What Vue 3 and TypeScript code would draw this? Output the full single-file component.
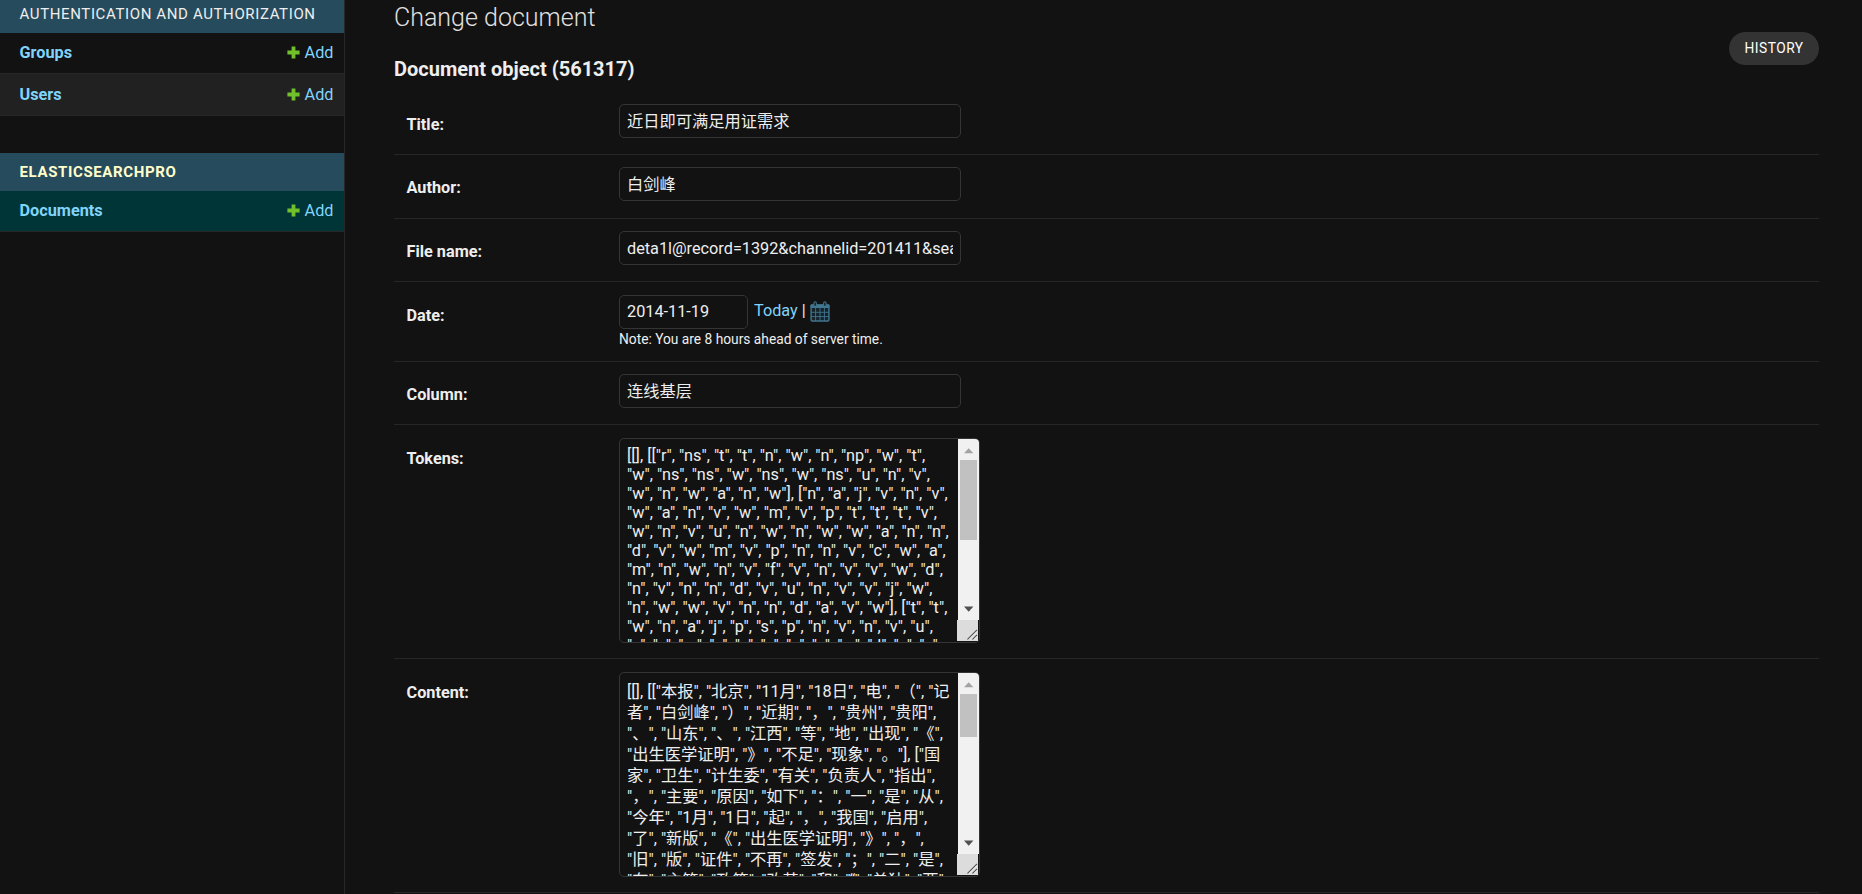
<script setup lang="ts">
interface SidebarItem { name: string; tone: string }
interface SidebarModule { caption: string; current: boolean; items: SidebarItem[] }

const modules: SidebarModule[] = [
  {
    caption: 'Authentication and Authorization',
    current: false,
    items: [{ name: 'Groups', tone: 'plain' }, { name: 'Users', tone: 'even' }],
  },
  {
    caption: 'Elasticsearchpro',
    current: true,
    items: [{ name: 'Documents', tone: 'current' }],
  },
]

interface Field { label: string; kind: 'text' | 'date' | 'area'; value?: string; lines?: string[]; cls: string }

const fields: Field[] = [
  { label: 'Title:', kind: 'text', value: '近日即可满足用证需求', cls: 'title-row' },
  { label: 'Author:', kind: 'text', value: '白剑峰', cls: 'author-row' },
  { label: 'File name:', kind: 'text', value: 'deta1l@record=1392&channelid=201411&sea', cls: 'file-row' },
  { label: 'Date:', kind: 'date', value: '2014-11-19', cls: 'date-row' },
  { label: 'Column:', kind: 'text', value: '连线基层', cls: 'column-row' },
  {
    label: 'Tokens:',
    kind: 'area',
    cls: 'tokens-row',
    lines: [
      '[[], [["r", "ns", "t", "t", "n", "w", "n", "np", "w", "t",',
      '"w", "ns", "ns", "w", "ns", "w", "ns", "u", "n", "v",',
      '"w", "n", "w", "a", "n", "w"], ["n", "a", "j", "v", "n", "v",',
      '"w", "a", "n", "v", "w", "m", "v", "p", "t", "t", "t", "v",',
      '"w", "n", "v", "u", "n", "w", "n", "w", "w", "a", "n", "n",',
      '"d", "v", "w", "m", "v", "p", "n", "n", "v", "c", "w", "a",',
      '"m", "n", "w", "n", "v", "f", "v", "n", "v", "v", "w", "d",',
      '"n", "v", "n", "n", "d", "v", "u", "n", "v", "v", "j", "w",',
      '"n", "w", "w", "v", "n", "n", "d", "a", "v", "w"], ["t", "t",',
      '"w", "n", "a", "j", "p", "s", "p", "n", "v", "n", "v", "u",',
      '"v", "v", "m", "v", "v", "v", "v", "v", "w", "d", "v", "v",',
    ],
  },
  {
    label: 'Content:',
    kind: 'area',
    cls: 'content-row',
    lines: [
      '[[], [["本报", "北京", "11月", "18日", "电", "（", "记',
      '者", "白剑峰", "）", "近期", "，", "贵州", "贵阳",',
      '"、", "山东", "、", "江西", "等", "地", "出现", "《",',
      '"出生医学证明", "》", "不足", "现象", "。"], ["国',
      '家", "卫生", "计生委", "有关", "负责人", "指出",',
      '"，", "主要", "原因", "如下", "：", "一", "是", "从",',
      '"今年", "1月", "1日", "起", "，", "我国", "启用",',
      '"了", "新版", "《", "出生医学证明", "》", "，",',
      '"旧", "版", "证件", "不再", "签发", "；", "二", "是",',
      '"在", "主管", "政策", "改革", "和", "“", "单独", "两",',
    ],
  },
]
</script>

<template>
  <div class="page">
    <nav class="sidebar">
      <section v-for="m in modules" :key="m.caption" class="module" :class="{ active: m.current }">
        <h2 class="caption">{{ m.caption }}</h2>
        <div v-for="item in m.items" :key="item.name" class="model" :class="item.tone">
          <a class="model-name">{{ item.name }}</a>
          <a class="add">
            <svg class="plus" width="13" height="13" viewBox="0 0 13 13"><path d="M4.6 0.4h3.8v4.2h4.2v3.8h-4.2v4.2h-3.8v-4.2h-4.2v-3.8h4.2z" fill="#70bf2b" /></svg>
            <span>Add</span>
          </a>
        </div>
      </section>
    </nav>
    <main class="content">
      <header class="heading">
        <div>
          <h1>Change document</h1>
          <h2>Document object (561317)</h2>
        </div>
        <a class="history">HISTORY</a>
      </header>
      <form>
        <div v-for="f in fields" :key="f.label" class="row" :class="f.cls">
          <label>{{ f.label }}</label>
          <div v-if="f.kind === 'text'" class="box wide"><span>{{ f.value }}</span></div>
          <div v-else-if="f.kind === 'date'" class="date-field">
            <div class="date-line">
              <div class="box short"><span>{{ f.value }}</span></div>
              <span class="shortcuts"><a>Today</a><i class="bar">|</i></span>
              <svg class="calendar" width="20" height="21" viewBox="0 0 20 21">
                <rect x="1.1" y="4" width="17.8" height="16" rx="1" fill="#14222a" stroke="#417690" stroke-width="1.4" />
                <rect x="0.5" y="3.4" width="19" height="3.6" rx="1" fill="#417690" />
                <path d="M5.6 7v13M10 7v13M14.4 7v13M1 11.3h18M1 15.6h18" stroke="#417690" stroke-width="0.9" />
                <path d="M3.9 5.4V2q0-1.3 1.2-1.3T6.3 2v3.4zM13.7 5.4V2q0-1.3 1.2-1.3T16.1 2v3.4z" fill="#121212" stroke="#417690" stroke-width="1.1" />
              </svg>
            </div>
            <p class="note">Note: You are 8 hours ahead of server time.</p>
          </div>
          <div v-else class="area">
            <div class="lines"><div v-for="(line, i) in f.lines" :key="i" class="line">{{ line }}</div></div>
            <div class="scroll">
              <div class="track">
                <svg width="21" height="21" viewBox="0 0 21 21"><path d="M6 14.2h9.4L10.7 9.2z" fill="#a3a3a3" /></svg>
                <div class="thumb"></div>
                <svg class="down" width="21" height="21" viewBox="0 0 21 21"><path d="M6 7.5h9.4L10.7 12.8z" fill="#505050" /></svg>
              </div>
              <div class="corner"><svg width="21" height="21" viewBox="0 0 21 21"><path d="M10.5 19.5l9.5-9.5M15.5 19.5l4.5-4.5" stroke="#555" stroke-width="1.1" /><path d="M11.7 19.7l8.5-8.5M16.7 19.7l3.5-3.5" stroke="#fff" stroke-width="0.7" /></svg></div>
            </div>
          </div>
        </div>
      </form>
    </main>
  </div>
</template>

<style>
html, body { margin: 0; background: #121212; overflow: hidden; }
</style>

<style scoped>
* { box-sizing: border-box; }
.page { display: flex; height: 894px; overflow: hidden; background: #121212; color: #eee; font: 16.25px/20px Roboto, "Noto Sans CJK SC", sans-serif; }
h1, h2, p { margin: 0; }
.sidebar { width: 345px; flex: none; border-right: 1px solid #272727; }
.module { margin-bottom: 37px; }
.caption { height: 33px; padding: 4px 20px 0 19.5px; background: #264b5d; color: #eee; font-size: 15px; font-weight: 400; line-height: 20px; letter-spacing: .625px; text-transform: uppercase; }
.active .caption { height: 38px; padding-top: 9px; color: #ffc; font-weight: 700; }
.model { display: flex; justify-content: space-between; height: 41px; padding: 10px 10.5px 0 19.5px; border-bottom: 1px solid #272727; color: #81d4fa; }
.model.even { height: 42px; padding-top: 11px; background: #212121; }
.model.current { background: #003538; }
.model-name { font-weight: 700; }
.add { display: flex; gap: 5px; }
.plus { margin-top: 3px; }
.content { flex: 1; padding: 0 43px 0 49px; }
.heading { display: flex; justify-content: space-between; height: 91px; }
h1 { margin-top: 3px; font-size: 25px; line-height: 30px; font-weight: 300; color: #e0e0e0; }
.heading h2 { margin-top: 24px; font-size: 20px; line-height: 24px; font-weight: 700; }
.history { width: 90px; height: 33px; margin-top: 32px; border-radius: 17px; background: #333; text-align: center; font-size: 13.75px; line-height: 33px; letter-spacing: .5px; color: #fff; }
.row { display: flex; height: 64px; padding: 13px 0 0 12.5px; border-bottom: 1px solid #272727; }
.file-row, .column-row { height: 63px; }
.file-row, .column-row { padding-top: 12px; }
.author-row { padding-top: 12px; }
.date-row { height: 80px; }
.tokens-row, .content-row { height: 234px; }
label { width: 212.5px; flex: none; padding-top: 11px; font-weight: 700; }
.box { height: 34px; padding: 0 7px; border: 1px solid #353535; border-radius: 5px; line-height: 34px; }
.box span { display: block; height: 32px; overflow: hidden; white-space: nowrap; }
.wide { width: 342px; }
.short { width: 129px; line-height: 32px; }
.date-line { display: flex; }
.shortcuts { display: flex; gap: 4px; margin-left: 6px; line-height: 31px; }
.shortcuts a { color: #81d4fa; }
.bar { font-style: normal; }
.calendar { margin: 6px 0 0 4px; }
.note { font-size: 13.75px; line-height: 20px; }
.area { display: flex; justify-content: space-between; width: 361px; height: 205px; overflow: hidden; border: 1px solid #353535; border-radius: 5px; }
.lines { height: 203px; padding: 7px 0 0 7px; overflow: hidden; white-space: pre; text-spacing-trim: space-all; }
.line { height: 19px; line-height: 19px; }
.content-row .lines { padding-top: 8px; }
.content-row .line { height: 21px; line-height: 21px; }
.scroll { width: 22px; flex: none; }
.track { display: flex; flex-direction: column; width: 21px; height: 181px; margin-left: 1px; background: #f1f1f1; }
.track svg { flex: none; }
.thumb { width: 17px; height: 80px; margin-left: 2px; background: #c1c1c1; }
.content-row .thumb { height: 43px; }
.down { margin-top: auto; }
.corner { width: 21px; height: 21px; background: #dcdcdc; }
.corner svg { display: block; }
</style>
